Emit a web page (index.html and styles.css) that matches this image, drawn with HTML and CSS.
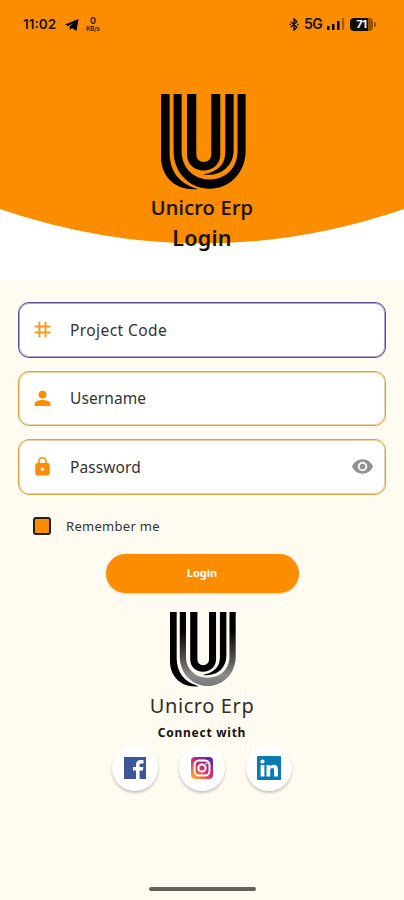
FILE: index.html
```html
<!DOCTYPE html>
<html lang="en">
<head>
<meta charset="utf-8">
<title>Unicro Erp Login</title>
<link rel="stylesheet" href="styles.css">
</head>
<body>
<svg width="0" height="0" class="defs">
  <defs>
    <linearGradient id="fade" x1="0" y1="0" x2="0" y2="1"><stop offset=".25" stop-color="#000"/><stop offset=".65" stop-color="#555"/><stop offset=".85" stop-color="#8b8b8b"/><stop offset="1" stop-color="#777"/></linearGradient>
    <linearGradient id="insta" x1="0" y1="1" x2=".8" y2="0"><stop offset="0" stop-color="#ffc13d"/><stop offset=".3" stop-color="#f5653a"/><stop offset=".6" stop-color="#c52a78"/><stop offset="1" stop-color="#5a27a8"/></linearGradient>
    <symbol id="logo" viewBox="0 0 85 96" preserveAspectRatio="none">
      <path d="M0 0H8.600V59C8.600 77 18 90 37 95C14 97.500 0 82 0 63Z"/>
      <path d="M12.600 0H20.600V57C20.600 74 33 85.500 48.600 85.500S76.600 74 76.600 57V0H84.600V57C84.600 79 68 94.800 48.600 94.800S12.600 79 12.600 57Z"/>
      <path d="M26 0H35.300V60.500C35.300 65 38.500 68 42.800 68S50.300 65 50.300 60.500V0H59.300V60.500C59.300 70 52 76.500 42.600 76.500S26 70 26 60.500Z"/>
      <path d="M64.300 0H72.600V56C72.600 72 60 83 42 80.500C56 78 64.300 71 64.300 58Z"/>
    </symbol>
    <symbol id="logo-fade" viewBox="0 0 85 96" preserveAspectRatio="none">
      <path d="M0 0H8.600V59C8.600 77 18 90 37 95C14 97.500 0 82 0 63Z"/>
      <path fill="url(#fade)" d="M12.600 0H20.600V57C20.600 74 33 84 48.600 84S76.600 74 76.600 57V0H84.600V57C84.600 79 68 94.800 48.600 94.800S12.600 79 12.600 57Z"/>
      <path d="M26 0H35.300V60.500C35.300 65 38.500 68 42.800 68S50.300 65 50.300 60.500V0H59.300V60.500C59.300 70 52 76.500 42.600 76.500S26 70 26 60.500Z"/>
      <path d="M64.300 0H72.600V56C72.600 72 60 83 42 80.500C56 78 64.300 71 64.300 58Z"/>
    </symbol>
  </defs>
</svg>
<header class="hero">
  <svg class="wave" viewBox="0 0 404 280"><path fill="#fc8c00" d="M0 0H404V209Q202 278 0 209Z"/></svg>
  <div class="status">
    <span class="time">11:02</span>
    <svg class="plane" viewBox="0 0 14 12"><path d="M13.500 0L11.500 12L7 9L5 11L4.500 7.500L9 4L3 7L0 5.500Z"/></svg>
    <span class="speed"><b>0</b><small>KB/s</small></span>
    <svg class="bt" viewBox="0 0 10 14"><path d="M1.500 4L8 10L5 13V1L8 4L1.500 10M0 7H1.500M8.500 7H10"/></svg>
    <span class="net">5G</span>
    <svg class="signal" viewBox="0 0 18 12"><path d="M0 8h2.500v4H0zM5 6h2.500v6H5zM10 3h2.500v9H10z"/><path opacity=".35" d="M15 0h2.200v12H15z"/></svg>
    <span class="battery"><span>71</span></span>
  </div>
  <svg class="logo-top"><use href="#logo"/></svg>
  <div class="brand">Unicro Erp</div>
  <h1>Login</h1>
</header>
<main>
  <form class="form">
    <label class="field active">
      <svg class="icon" viewBox="0 0 24 24"><path fill="none" stroke="#f79a1c" stroke-width="2.200" d="M8.500 3V21M15.500 3V21M3 8.500H21M3 15.500H21"/></svg>
      <span class="label-code">Project Code</span>
    </label>
    <label class="field">
      <svg class="icon" viewBox="0 0 24 24"><circle cx="12" cy="7.500" r="4.500"/><path d="M3 20.500V18C3 14.800 8.500 13.700 12 13.700S21 14.800 21 18V20.500Z"/></svg>
      <span>Username</span>
    </label>
    <label class="field">
      <svg class="icon lock" viewBox="0 0 24 24"><path fill-rule="evenodd" d="M18 8h-1V6A5 5 0 0 0 7 6v2H6a2.300 2.300 0 0 0-2.300 2.300v9.700A2.300 2.300 0 0 0 6 22.300h12a2.300 2.300 0 0 0 2.300-2.300v-9.700A2.300 2.300 0 0 0 18 8ZM8.900 8V6a3.100 3.100 0 0 1 6.200 0v2ZM12 17a2 2 0 1 1 0-4a2 2 0 0 1 0 4Z"/></svg>
      <span>Password</span>
      <svg class="eye" viewBox="0 0 22 15"><path fill-rule="evenodd" d="M11 0C6 0 1.800 3.100 0 7.500C1.800 11.900 6 15 11 15s9.200-3.100 11-7.500C20.200 3.100 16 0 11 0Zm0 12.500a5 5 0 1 1 0-10a5 5 0 0 1 0 10Zm0-2a3 3 0 1 0 0-6a3 3 0 0 0 0 6Z"/></svg>
    </label>
    <label class="remember"><span class="box"></span><span>Remember me</span></label>
    <button type="button" class="login"><span>Login</span></button>
  </form>
  <section class="connect">
    <svg class="logo-small"><use href="#logo-fade"/></svg>
    <div class="brand-light">Unicro Erp</div>
    <div class="with">Connect with</div>
    <div class="socials">
      <a><svg viewBox="0 0 24 24"><rect x="1" y="1" width="22" height="22" fill="#3c5699"/><path fill="#fff" d="M13 23V14.500H10V11H13V8.500C13 5.500 14.800 4 17.500 4H20.500V7.500H18.500C17 7.500 16.600 8.200 16.600 9.300V11H20.400L19.900 14.500H16.600V23Z"/></svg></a>
      <a><svg viewBox="0 0 24 24"><rect x="1" y="1" width="22" height="22" rx="4" fill="url(#insta)"/><g fill="none" stroke="#fff" stroke-width="2"><rect x="4.500" y="4.500" width="15" height="15" rx="4.500"/><circle cx="12" cy="12" r="3.600"/></g><circle cx="16.500" cy="7.500" r="1" fill="#fff"/></svg></a>
      <a><svg viewBox="0 0 24 24"><rect width="24" height="24" rx="1" fill="#087bb5"/><g fill="#fff"><circle cx="5.500" cy="5.500" r="2.100"/><path d="M3.600 9h3.800v11.500H3.600zM9.500 9h3.600v1.600c.7-1.200 2-1.900 3.600-1.900c3.500 0 4.200 2.300 4.200 5.400v6.400h-3.800v-5.600c0-1.400 0-3-1.900-3s-2 1.500-2 3v5.600H9.500z"/></g></svg></a>
    </div>
  </section>
</main>
<footer><div class="home"></div></footer>
</body>
</html>
```
FILE: styles.css
```css
* { box-sizing: border-box; }
body { margin: 0; width: 404px; height: 900px; overflow: hidden; background: #fffbf0; color: #171310; font-family: "Noto Sans", sans-serif; display: flex; flex-direction: column; }
svg { display: block; flex: none; }
.defs { position: absolute; }
.hero { position: relative; height: 280px; flex: none; background: #fff; display: flex; flex-direction: column; align-items: center; }
.wave { position: absolute; inset: 0; width: 404px; height: 280px; }
.hero > :not(.wave) { position: relative; }
.status { width: 100%; height: 48px; padding: 0 31px 0 23px; display: flex; align-items: center; white-space: nowrap; }
.time { font: 600 13.5px/16px Inter, sans-serif; width: 42px; }
.plane { width: 14px; height: 12px; margin-top: 2px; }
.speed { width: 16px; margin-left: 6px; display: flex; flex-direction: column; align-items: center; font-family: Inter, sans-serif; }
.speed b { font-size: 9px; line-height: 9px; font-weight: 600; }
.speed small { font-size: 6px; font-weight: 600; line-height: 7px; }
.bt { width: 10px; height: 13px; margin-left: auto; fill: none; stroke: #171310; stroke-width: 1.6; }
.net { font: 600 14px/16px Inter, sans-serif; margin-left: 5px; width: 23px; letter-spacing: -.5px; }
.signal { width: 18px; height: 12px; }
.battery { position: relative; margin-left: 5px; width: 23px; height: 13px; border-radius: 4px; background: linear-gradient(90deg, #120b02 79%, #955500 79%); color: #fff; font: 700 11px/13px Inter, sans-serif; text-align: center; letter-spacing: -.4px; }
.battery::after { content: ""; position: absolute; right: -3px; top: 4px; width: 2px; height: 5px; border-radius: 0 2px 2px 0; background: #955500; }
.logo-top { width: 85px; height: 96px; margin: 46px 0 0 2px; }
.brand { height: 34px; font-size: 20px; line-height: 34px; font-weight: 500; letter-spacing: .25px; margin-top: 1px; -webkit-text-stroke: .2px; }
h1 { margin: -1px 0 0; font-size: 21.5px; line-height: 28px; font-weight: 600; letter-spacing: .2px; }
main { flex: 1; }
.form { padding: 22px 18px 0; display: flex; flex-direction: column; gap: 13px; }
.field { height: 55.5px; border: 1px solid #dfa142; border-radius: 11px; background: #fff; box-shadow: inset 0 0 0 1px #e2a85088; display: flex; align-items: center; padding: 0 12px 0 13px; color: #333; font-size: 15.5px; line-height: 20px; letter-spacing: .1px; }
.field.active { border-color: #5d4c99; box-shadow: inset 0 0 0 1px #6555a088; }
.label-code { letter-spacing: .42px; }
.icon { width: 21px; height: 21px; margin-right: 17px; fill: #fc8c00; }
.lock { height: 23px; }
.eye { width: 21px; height: 15px; margin-left: auto; fill: #929292; }
.remember { height: 20px; margin-top: 8px; padding-left: 15px; display: flex; align-items: center; gap: 15px; font-size: 13px; line-height: 20px; letter-spacing: .3px; color: #333; }
.box { width: 18px; height: 18px; border: 2px solid #242018; border-radius: 3px; background: #fc8c00; }
.login { width: 193px; height: 39px; margin: 5px auto 1px; border: 0; border-radius: 20px; background: #fc8c00; color: #fff; font: 700 11px/16px "Noto Sans", sans-serif; box-shadow: 0 1px 2px #bb874655; }
.connect { display: flex; flex-direction: column; align-items: center; }
.logo-small { width: 66px; height: 75px; margin: 18px 0 0 2px; }
.brand-light { height: 34px; line-height: 34px; margin-top: 2px; font-size: 20px; font-weight: 400; letter-spacing: .6px; color: #302e2b; }
.with { height: 20px; line-height: 20px; font-size: 12px; font-weight: 700; letter-spacing: .75px; }
.socials { display: flex; gap: 21px; margin-top: 2px; }
.socials a { width: 46px; height: 46px; border-radius: 50%; background: #fff; display: grid; place-items: center; box-shadow: 0 2px 3px #00000038; }
.socials svg { width: 24px; height: 24px; }
footer { height: 15px; display: flex; justify-content: center; }
.home { width: 107px; height: 4px; margin-top: 2px; border-radius: 2px; background: #65605a; }
```
